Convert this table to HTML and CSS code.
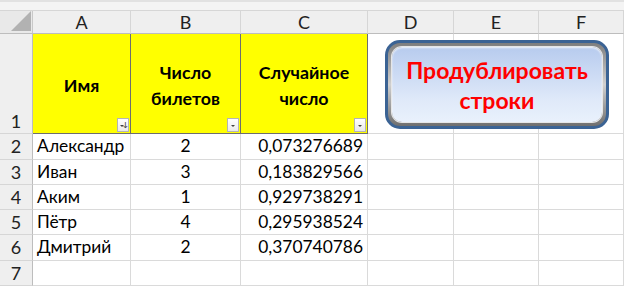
FILE: index.html
```html
<!DOCTYPE html>
<html>
<head>
<meta charset="utf-8">
<link rel="stylesheet" href="styles.css">
</head>
<body>
<div class="sheet">
  <div class="topstrip"></div>
  <div class="grid">
    <div class="corner"><span class="tri"></span></div>
    <div class="ch">A</div>
    <div class="ch">B</div>
    <div class="ch">C</div>
    <div class="ch">D</div>
    <div class="ch">E</div>
    <div class="ch last">F</div>

    <div class="rh rh1">1</div>
    <div class="hc hcA">Имя<span class="filt"><span class="arr"></span><span class="srt">↓</span></span></div>
    <div class="hc">Число<br>билетов<span class="filt"><span class="arr"></span></span></div>
    <div class="hc">Случайное<br>число<span class="filt"><span class="arr"></span></span></div>
    <div class="c hd"></div><div class="c hd"></div><div class="c hd last"></div>

    <div class="rh">2</div><div class="c">Александр</div><div class="c ctr">2</div><div class="c num">0,073276689</div><div class="c"></div><div class="c"></div><div class="c last"></div>
    <div class="rh">3</div><div class="c">Иван</div><div class="c ctr">3</div><div class="c num">0,183829566</div><div class="c"></div><div class="c"></div><div class="c last"></div>
    <div class="rh">4</div><div class="c">Аким</div><div class="c ctr">1</div><div class="c num">0,929738291</div><div class="c"></div><div class="c"></div><div class="c last"></div>
    <div class="rh">5</div><div class="c">Пётр</div><div class="c ctr">4</div><div class="c num">0,295938524</div><div class="c"></div><div class="c"></div><div class="c last"></div>
    <div class="rh">6</div><div class="c">Дмитрий</div><div class="c ctr">2</div><div class="c num">0,370740786</div><div class="c"></div><div class="c"></div><div class="c last"></div>
    <div class="rh">7</div><div class="c"></div><div class="c"></div><div class="c"></div><div class="c"></div><div class="c"></div><div class="c last"></div>
  </div>
  <div class="btn"><div class="btn-in">Продублировать<br>строки</div></div>
</div>
</body>
</html>
```
FILE: styles.css
```css
html, body { margin: 0; padding: 0; background: #ffffff; }
body { font-family: Lato, "Liberation Sans", sans-serif; color: #000; }
.sheet { position: relative; width: 624px; height: 288px; overflow: hidden; }
.topstrip { height: 11px; background: #f4f4f4; border-top: 2px solid #e2e2e2; box-sizing: border-box; border-bottom: 1px solid #d6d6d6; }
.grid {
  display: grid;
  grid-template-columns: 33px 98px 110px 127px 86px 85px 85px;
  grid-template-rows: 23px 100px 26px 25px 25px 25px 26px 25px;
}
.grid > div { box-sizing: border-box; }
.corner { background: #e9e9e9; border-right: 1px solid #c8c8c8; border-bottom: 1px solid #bdbdbd; position: relative; }
.tri { position: absolute; right: 1px; bottom: 2px; width: 0; height: 0; border-left: 20px solid transparent; border-bottom: 20px solid #b2b2b2; }
.ch { background: #efefef; border-right: 1px solid #d6d6d6; border-bottom: 1px solid #bdbdbd; text-align: center; font-size: 18px; line-height: 22px; color: #222; }
.rh { background: #efefef; border-right: 1px solid #bdbdbd; border-bottom: 1px solid #d6d6d6; text-align: center; font-size: 18px; line-height: 25px; color: #222; }
.rh1 { display: flex; align-items: flex-end; justify-content: center; line-height: 24px; }
.c { border-right: 1px solid #dadada; border-bottom: 1px solid #dadada; font-size: 17.4px; line-height: 24px; padding: 0 4px; white-space: nowrap; }
.ctr { text-align: center; }
.num { text-align: right; }
.hc { background: #ffff00; border-right: 1px solid #6e6e6e; border-bottom: 1px solid #6e6e6e; display: flex; align-items: center; justify-content: center; text-align: center; font-weight: bold; font-size: 17.8px; line-height: 26px; position: relative; padding-top: 2px; }
.filt { position: absolute; right: 1px; bottom: 1px; width: 12px; height: 14px; background: linear-gradient(#ffffff, #eaeaea); border: 1px solid #b4b4b4; box-sizing: border-box; }
.arr { position: absolute; left: 3px; bottom: 4px; width: 0; height: 0; border-left: 2px solid transparent; border-right: 2px solid transparent; border-top: 2px solid #444; }
.srt { position: absolute; right: 0; top: 0; font-size: 7px; line-height: 10px; color: #444; }
.hcA .arr { left: 2px; }
.btn {
  position: absolute; left: 385px; top: 40px; width: 224px; height: 89px;
  box-sizing: border-box; border: 3px solid #3b6394; border-radius: 15px;
  background: linear-gradient(#7e7e7e, #d0d0d0 50%, #6f6f6f);
  padding: 4px;
}
.btn-in {
  height: 100%; box-sizing: border-box; border-radius: 10px;
  background: linear-gradient(#b7cbee, #dfe9f9 70%, #e9f1fc);
  box-shadow: 0 0 0 1px #e6e6e6, inset 0 1px 2px rgba(255,255,255,0.8);
  color: #ff0000; font-weight: bold; font-size: 23px; line-height: 30px;
  text-align: center; padding-top: 8px;
}
```
